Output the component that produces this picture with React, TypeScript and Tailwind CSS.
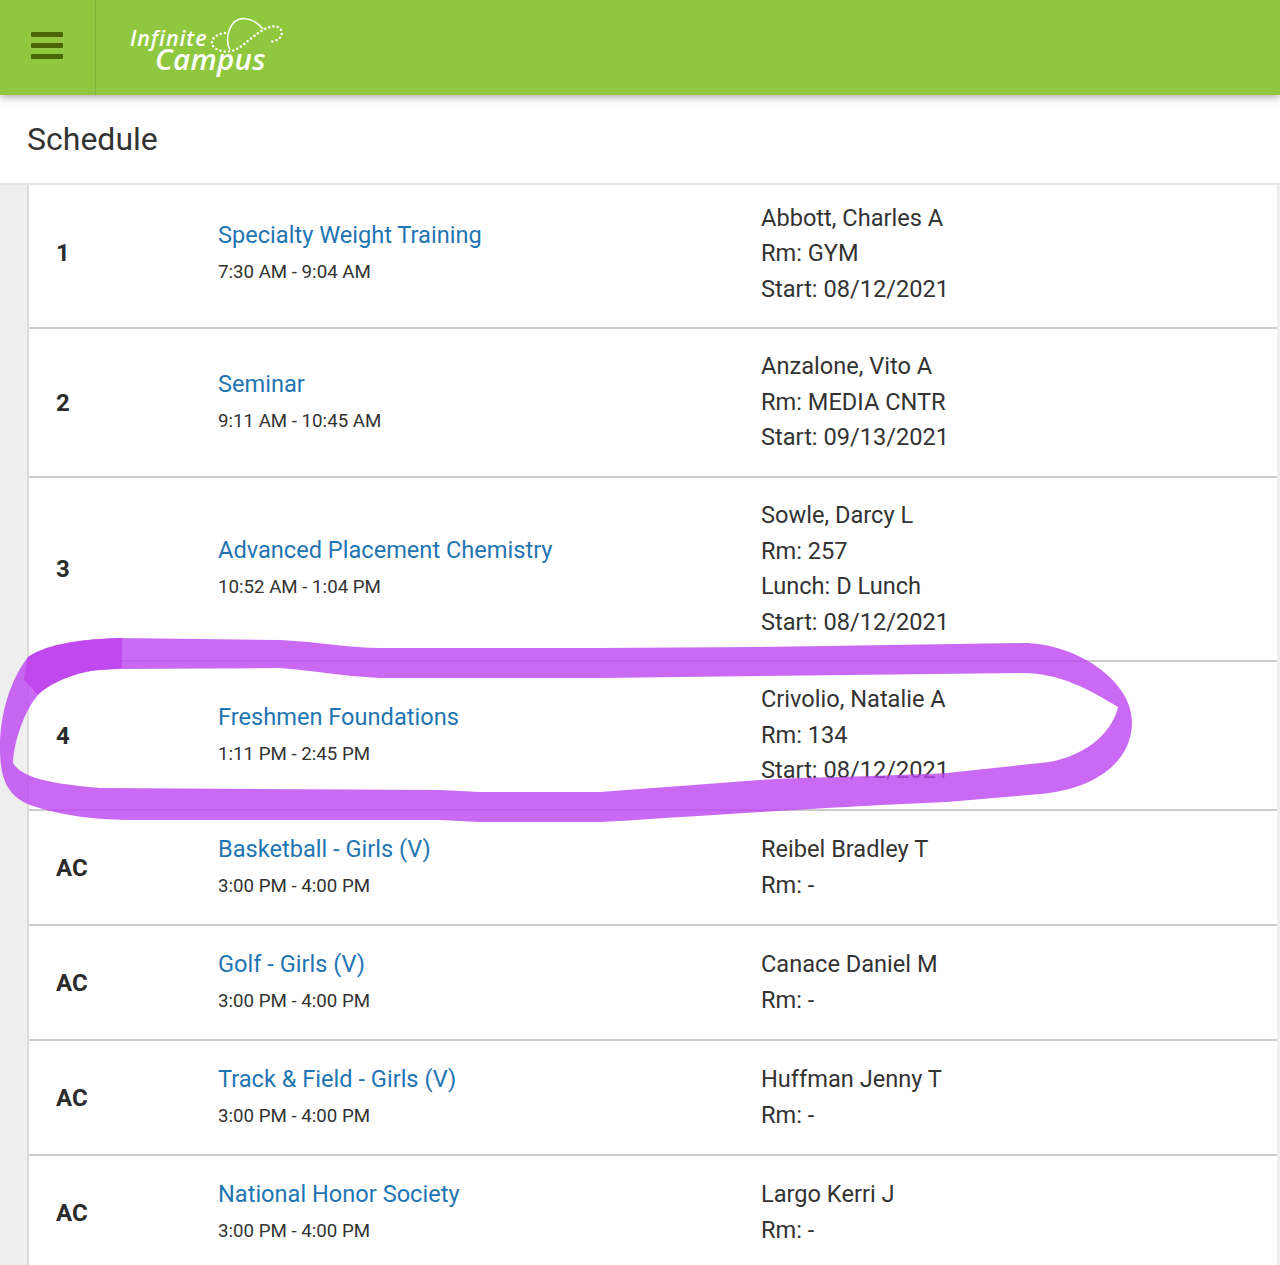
interface Course {
  period: string;
  name: string;
  time: string;
  details: string[];
  rowClass: string;
}

const courses: Course[] = [
  {
    period: "1",
    name: "Specialty Weight Training",
    time: "7:30 AM - 9:04 AM",
    details: ["Abbott, Charles A", "Rm: GYM", "Start: 08/12/2021"],
    rowClass: "h-[144px] pb-[4px]",
  },
  {
    period: "2",
    name: "Seminar",
    time: "9:11 AM - 10:45 AM",
    details: ["Anzalone, Vito A", "Rm: MEDIA CNTR", "Start: 09/13/2021"],
    rowClass: "h-[149px]",
  },
  {
    period: "3",
    name: "Advanced Placement Chemistry",
    time: "10:52 AM - 1:04 PM",
    details: ["Sowle, Darcy L", "Rm: 257", "Lunch: D Lunch", "Start: 08/12/2021"],
    rowClass: "h-[184px]",
  },
  {
    period: "4",
    name: "Freshmen Foundations",
    time: "1:11 PM - 2:45 PM",
    details: ["Crivolio, Natalie A", "Rm: 134", "Start: 08/12/2021"],
    rowClass: "h-[149px]",
  },
  {
    period: "AC",
    name: "Basketball - Girls (V)",
    time: "3:00 PM - 4:00 PM",
    details: ["Reibel Bradley T", "Rm: -"],
    rowClass: "h-[115px]",
  },
  {
    period: "AC",
    name: "Golf - Girls (V)",
    time: "3:00 PM - 4:00 PM",
    details: ["Canace Daniel M", "Rm: -"],
    rowClass: "h-[115px]",
  },
  {
    period: "AC",
    name: "Track & Field - Girls (V)",
    time: "3:00 PM - 4:00 PM",
    details: ["Huffman Jenny T", "Rm: -"],
    rowClass: "h-[115px]",
  },
  {
    period: "AC",
    name: "National Honor Society",
    time: "3:00 PM - 4:00 PM",
    details: ["Largo Kerri J", "Rm: -"],
    rowClass: "h-[115px]",
  },
];

function Logo() {
  return (
    <svg width="170" height="75" viewBox="120 10 170 75" fill="none" className="ml-[24px] shrink-0">
      <path
        d="M230 50C224 38 230 18 244 18.500C252 19 258 23 263 29"
        stroke="#fff"
        strokeWidth="1.500"
      />
      <path
        d="M225 33C216 34 211 39 212 44C214 50 224 53 232 51C242 48 250 38 260 32C268 26 278 24 281 30C284 36 278 42 268 42"
        stroke="#fff"
        strokeWidth="2.600"
        strokeLinecap="round"
        strokeDasharray="0 4.300"
      />
      <text x="130" y="46" fill="#fff" fontFamily="'Open Sans', sans-serif" fontStyle="italic" fontWeight="600" fontSize="21.500" letterSpacing="0.9">
        Infinite
      </text>
      <text x="155" y="70" fill="#fff" fontFamily="'Open Sans', sans-serif" fontStyle="italic" fontWeight="600" fontSize="29.500" letterSpacing="0.3">
        Campus
      </text>
    </svg>
  );
}

function Scribble() {
  return (
    <svg width="1280" height="1265" viewBox="0 0 1280 1265" className="absolute left-0 top-0 pointer-events-none blur-[0.6px]">
      <path
        fillRule="evenodd"
        fill="#bd44f0"
        fillOpacity="0.8"
        d="M28 657C45 646 70 640 117 638L280 640C320 642 350 648 380 648L600 648L760 647L1023 643C1075 643 1132 680 1132 722C1132 765 1090 790 1040 794L947 802C850 806 760 812 600 822L480 822L440 820L280 820C220 820 170 820 133 820C100 820 60 816 30 805C5 795 0 775 0 747C0 715 10 680 28 657Z
        M120 669L100 670C80 671 50 682 38 695C25 710 14 740 13 763C20 775 40 783 100 788L440 790L480 792L600 792L760 780C800 777 870 777 947 773L1040 763C1080 760 1112 735 1118 707C1090 690 1060 673 1023 673L760 676L600 678L380 678C340 676 310 670 280 668Z"
      />
      <path
        fill="#bf40ee"
        fillOpacity="0.8"
        d="M122 638L117 638C70 640 45 646 28 657C26 664 25 672 24 680L38 695C50 682 80 671 100 670L122 668Z"
      />
    </svg>
  );
}

export default function App() {
  return (
    <div className="relative h-[1265px] overflow-hidden bg-white font-['Roboto',sans-serif] text-[#333333]">
      <header className="relative z-10 flex h-[95px] items-stretch bg-[#8fc73e] shadow-[0_2px_8px_rgba(0,0,0,0.35)]">
        <div className="flex w-[96px] shrink-0 flex-col justify-center gap-[6px] border-r border-[#7fb236] pb-[4px] pl-[31px]">
          <span className="h-[5px] w-[32px] rounded-[1px] bg-[#4a6406]" />
          <span className="h-[5px] w-[32px] rounded-[1px] bg-[#4a6406]" />
          <span className="h-[5px] w-[32px] rounded-[1px] bg-[#4a6406]" />
        </div>
        <div className="flex items-center">
          <Logo />
        </div>
      </header>

      <div className="flex h-[90px] items-center border-b-2 border-[#e4e4e4] pl-[27px]">
        <h1 className="text-[32px] leading-none font-normal">Schedule</h1>
      </div>

      <div className="flex bg-[#eeeeee] pl-[27px] pr-[3px]">
        <div className="w-full border-l-2 border-[#dcdcdc] bg-white">
          {courses.map((course) => (
            <div
              key={course.name}
              className={`flex items-center border-b-2 border-[#cccccc] ${course.rowClass}`}
            >
              <div
                className={`w-[189px] shrink-0 pl-[27px] text-2xl font-bold text-[#2b2b2b] ${
                  course.period === "1" ? "mb-[2px]" : ""
                }`}
              >
                {course.period}
              </div>
              <div className="w-[543px] shrink-0">
                <div className="text-[23.6px] leading-[34px] text-[#1f75b3]">{course.name}</div>
                <div className="mt-[2px] text-[18.7px] leading-9">{course.time}</div>
              </div>
              <div className="text-[23.6px] leading-[35.5px]">
                {course.details.map((line) => (
                  <div key={line}>{line}</div>
                ))}
              </div>
            </div>
          ))}
        </div>
      </div>

      <Scribble />
    </div>
  );
}
